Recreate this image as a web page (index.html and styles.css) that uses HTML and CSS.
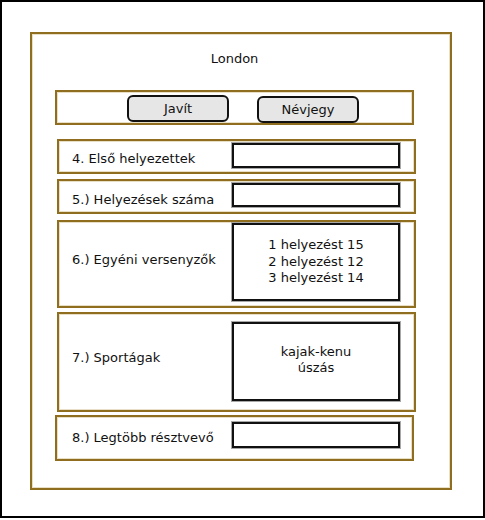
FILE: index.html
```html
<!DOCTYPE html>
<html lang="hu">
<head>
    <meta charset="UTF-8">
    <meta name="viewport" content="width=device-width, initial-scale=1.0">
    <title>London</title>
    <link rel="stylesheet" href="styles.css">
</head>
<body>

    <div class="frame">
        <div class="panel">
            <div class="title">London</div>

            <!-- gombsor -->
            <div class="toolbar">
                <button class="button">Javít</button>
                <button class="button button-second">Névjegy</button>
            </div>

            <!-- adatsorok -->
            <div class="row row-1">
                <span class="label">4. Első helyezettek</span>
                <div class="field"></div>
            </div>

            <div class="row row-2">
                <span class="label">5.) Helyezések száma</span>
                <div class="field"></div>
            </div>

            <div class="row row-3">
                <span class="label">6.) Egyéni versenyzők</span>
                <div class="field field-text">
                    <span>1 helyezést 15</span>
                    <span>2 helyezést 12</span>
                    <span>3 helyezést 14</span>
                </div>
            </div>

            <div class="row row-4">
                <span class="label">7.) Sportágak</span>
                <div class="field field-text">
                    <span>kajak-kenu</span>
                    <span>úszás</span>
                </div>
            </div>

            <div class="row row-5">
                <span class="label">8.) Legtöbb résztvevő</span>
                <div class="field"></div>
            </div>
        </div>
    </div>

</body>
</html>
```

FILE: styles.css
```css
body {
    font-family: 'DejaVu Sans', sans-serif;
    font-size: 13px;
    color: #111;
    background-color: #ffffff;
    margin: 0;
    padding: 0;
}

.frame {
    width: 485px;
    height: 518px;
    box-sizing: border-box;
    border: 2px solid #000;
    padding: 30px 0 0 28px;
}

.panel {
    width: 422px;
    height: 458px;
    box-sizing: border-box;
    border: 2px solid #8f6e1f;
    box-shadow: inset 0 0 0 1px #e8dfc6;
    padding: 17px 0 0 23px;
}

.title {
    width: 359px;
    line-height: 15px;
    text-align: center;
    margin-bottom: 24px;
}

.toolbar {
    display: flex;
    align-items: flex-start;
    gap: 28px;
    width: 359px;
    height: 35px;
    box-sizing: border-box;
    border: 2px solid #8f6e1f;
    box-shadow: inset 0 0 0 1px #e8dfc6;
    padding: 3px 0 0 70px;
}

.button {
    width: 102px;
    height: 27px;
    box-sizing: border-box;
    border: 2px solid #111;
    border-radius: 6px;
    background-color: #e6e6e6;
    font-family: 'DejaVu Sans', sans-serif;
    font-size: 13px;
    color: #111;
    padding: 0;
}

.button-second {
    margin-top: 1px;
}

.row {
    display: flex;
    align-items: flex-start;
    width: 359px;
    box-sizing: border-box;
    border: 2px solid #8f6e1f;
    box-shadow: inset 0 0 0 1px #e8dfc6;
    margin-left: 2px;
    padding-left: 13px;
}

.label {
    width: 160px;
    line-height: 15px;
    white-space: nowrap;
}

.field {
    width: 168px;
    box-sizing: border-box;
    border: 2px solid #111;
    box-shadow: 0 0 0 1px #a8a8a8;
}

.field-text {
    display: flex;
    flex-direction: column;
    justify-content: center;
    align-items: center;
    line-height: 16.5px;
}

/* sorok egyenkénti méretei */
.row-1 { height: 35px; margin-top: 14px; }
.row-1 .label { margin-top: 10px; }
.row-1 .field { margin-top: 2px; height: 25px; }

.row-2 { height: 35px; margin-top: 5px; }
.row-2 .label { margin-top: 11px; }
.row-2 .field { margin-top: 2px; height: 24px; }

.row-3 { height: 88px; margin-top: 6px; }
.row-3 .label { margin-top: 30px; }
.row-3 .field { margin-top: 1px; height: 78px; }

.row-4 { height: 100px; margin-top: 4px; }
.row-4 .label { margin-top: 36px; }
.row-4 .field { margin-top: 8px; height: 79px; padding-bottom: 3px; }

.row-5 { height: 46px; margin-top: 3px; margin-left: 0; padding-left: 15px; }
.row-5 .label { margin-top: 13px; }
.row-5 .field { margin-top: 5px; height: 26px; }
```
